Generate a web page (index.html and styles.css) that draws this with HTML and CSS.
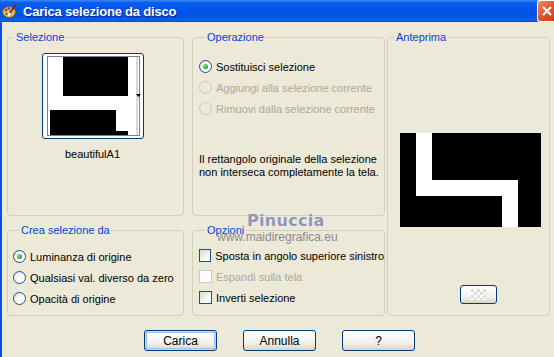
FILE: index.html
```html
<!DOCTYPE html>
<html lang="it">
<head>
    <meta charset="UTF-8">
    <title>Carica selezione da disco</title>
    <link rel="stylesheet" href="styles.css">
</head>
<body>
    <div class="window">
        <div class="titlebar">
            <svg class="app-icon" width="16" height="16" viewBox="0 0 16 16">
                <ellipse cx="7" cy="9" rx="6.5" ry="5.5" fill="#e9b36a" stroke="#8a5a20" stroke-width="1"/>
                <circle cx="4" cy="7" r="1.4" fill="#d0302a"/>
                <circle cx="7" cy="5.5" r="1.3" fill="#2a62d0"/>
                <circle cx="4.5" cy="11" r="1.3" fill="#2aa040"/>
                <path d="M14 1 L8 10" stroke="#6a3a10" stroke-width="2"/>
                <path d="M8 10 L6.5 13" stroke="#ffffff" stroke-width="2"/>
            </svg>
            <span class="title">Carica selezione da disco</span>
            <span class="close-btn">
                <svg width="16" height="14" viewBox="0 0 16 14">
                    <path d="M4 3 L12 11 M12 3 L4 11" stroke="#fff" stroke-width="2"/>
                </svg>
            </span>
        </div>

        <div class="client">
            <div class="panes">
                <fieldset class="group group-selection">
                    <legend>Selezione</legend>
                    <div class="thumb">
                        <svg width="100" height="84" viewBox="0 0 100 84">
                            <rect x="7" y="3" width="88" height="78" fill="#fff"/>
                            <rect x="20" y="3" width="65" height="39" fill="#000"/>
                            <rect x="7" y="56" width="66" height="25" fill="#000"/>
                            <rect x="73" y="77" width="12" height="4" fill="#000"/>
                            <rect x="93" y="3" width="2" height="78" fill="#d8d8d8"/>
                            <rect x="4.5" y="2.5" width="92" height="79" fill="none" stroke="#000" stroke-dasharray="1 1"/>
                            <path d="M93 40 L98 40 L95.5 43 Z" fill="#000"/>
                        </svg>
                    </div>
                    <div class="thumb-name">beautifulA1</div>
                </fieldset>

                <fieldset class="group group-operation">
                    <legend>Operazione</legend>
                    <div class="options">
                        <div class="option"><span class="radio checked"></span>Sostituisci selezione</div>
                        <div class="option disabled"><span class="radio"></span>Aggiungi alla selezione corrente</div>
                        <div class="option disabled"><span class="radio"></span>Rimuovi dalla selezione corrente</div>
                    </div>
                    <p class="note">Il rettangolo originale della selezione<br>non interseca completamente la tela.</p>
                </fieldset>

                <fieldset class="group group-preview">
                    <legend>Anteprima</legend>
                    <div class="preview">
                        <svg width="141" height="94" viewBox="0 0 141 94">
                            <rect width="141" height="94" fill="#000"/>
                            <rect x="16" y="0" width="16" height="63" fill="#fff"/>
                            <rect x="16" y="47" width="102" height="16" fill="#fff"/>
                            <rect x="102" y="47" width="16" height="47" fill="#fff"/>
                        </svg>
                    </div>
                    <button class="btn btn-small" type="button"><span class="checker"></span></button>
                </fieldset>

                <fieldset class="group group-source">
                    <legend>Crea selezione da</legend>
                    <div class="options">
                        <div class="option"><span class="radio checked"></span>Luminanza di origine</div>
                        <div class="option"><span class="radio"></span>Qualsiasi val. diverso da zero</div>
                        <div class="option"><span class="radio"></span>Opacità di origine</div>
                    </div>
                </fieldset>

                <fieldset class="group group-options">
                    <legend>Opzioni</legend>
                    <div class="options">
                        <div class="option"><span class="check"></span>Sposta in angolo superiore sinistro</div>
                        <div class="option disabled"><span class="check"></span>Espandi sulla tela</div>
                        <div class="option"><span class="check"></span>Inverti selezione</div>
                    </div>
                </fieldset>
            </div>

            <div class="buttons">
                <button class="btn btn-default" type="button">Carica</button>
                <button class="btn" type="button">Annulla</button>
                <button class="btn" type="button">?</button>
            </div>
        </div>

        <div class="watermark">
            <span class="wm-name">Pinuccia</span>
            <span class="wm-site">www.maidiregrafica.eu</span>
        </div>
    </div>
</body>
</html>
```

FILE: styles.css
```css
body {
    margin: 0;
    background: #ece9d8;
    font-family: "Liberation Sans", Arial, sans-serif;
    font-size: 11px;
    color: #000;
}
.window {
    position: relative;
    width: 554px;
    height: 357px;
    overflow: hidden;
    display: flex;
    flex-direction: column;
}
.titlebar {
    height: 22px;
    display: flex;
    align-items: center;
    padding-left: 2px;
    background: linear-gradient(#3d8af7 0%, #0a5fec 12%, #0055ea 45%, #0053e6 80%, #0a62f4 92%, #0046c8 100%);
}
.app-icon {
    margin-right: 5px;
}
.title {
    flex: 1;
    color: #fff;
    font-weight: bold;
    font-size: 13px;
    letter-spacing: -0.2px;
    text-shadow: 1px 1px 0 #0a2a8a;
}
.close-btn {
    width: 18px;
    height: 20px;
    margin-right: -2px;
    border: 1px solid #fff;
    border-right: none;
    border-radius: 3px 0 0 3px;
    background: linear-gradient(135deg, #f08a6a, #e0552f 50%, #c83c1c);
    display: flex;
    align-items: center;
    justify-content: center;
}
.client {
    flex: 1;
    border-left: 2px solid #0a4fe0;
    padding: 8px 4px 0 5px;
}
.panes {
    display: grid;
    grid-template-columns: 177px 193px 157px;
    grid-template-rows: 186px 93px;
    column-gap: 8px;
    row-gap: 7px;
}
.group {
    margin: 0;
    padding: 0;
    border: 1px solid #d0d0bf;
    border-radius: 4px;
    min-width: 0;
}
.group legend {
    margin-left: 6px;
    padding: 0 2px;
    color: #0046d5;
    font-size: 11px;
    line-height: 14px;
}
.group-selection {
    display: flex;
    flex-direction: column;
    align-items: center;
    padding-top: 9px;
    padding-right: 6px;
}
.thumb {
    width: 100px;
    height: 84px;
    border: 1px solid #003c74;
    border-radius: 3px;
    background: #fff;
}
.thumb svg {
    display: block;
}
.thumb-name {
    margin-top: 9px;
}
.options {
    display: flex;
    flex-direction: column;
}
.option {
    height: 21px;
    display: flex;
    align-items: center;
    gap: 4px;
    white-space: nowrap;
}
.option.disabled {
    color: #aca899;
}
.group-operation {
    padding: 12px 0 0 6px;
}
.group-source {
    padding: 9px 0 0 5px;
}
.group-options {
    padding: 8px 0 0 6px;
}
.radio {
    width: 11px;
    height: 11px;
    border: 1px solid #1c5180;
    border-radius: 50%;
    background: radial-gradient(circle at 70% 70%, #ffffff 30%, #dcd9cf 100%);
    display: flex;
    align-items: center;
    justify-content: center;
}
.radio.checked::after {
    content: "";
    width: 5px;
    height: 5px;
    border-radius: 50%;
    background: radial-gradient(circle at 35% 35%, #8fe08f, #21a121 70%);
}
.disabled .radio {
    border-color: #cac8bb;
    background: transparent;
}
.check {
    width: 11px;
    height: 11px;
    border: 1px solid #1c5180;
    background: linear-gradient(135deg, #dcd9cf, #ffffff 80%);
}
.disabled .check {
    border-color: #cac8bb;
    background: #fff;
}
.note {
    margin: 34px 0 0 0;
    line-height: 13px;
    white-space: nowrap;
}
.group-preview {
    grid-column: 3;
    grid-row: 1 / span 2;
    margin-left: -6px;
    display: flex;
    flex-direction: column;
    align-items: center;
}
.preview {
    margin-top: 89px;
    margin-left: 12px;
    align-self: flex-start;
}
.preview svg {
    display: block;
}
.btn {
    width: 73px;
    height: 21px;
    padding: 0;
    border: 1px solid #003c74;
    border-radius: 3px;
    background: linear-gradient(#ffffff, #f3f2ed 60%, #d8d5c8);
    font-family: "Liberation Sans", Arial, sans-serif;
    font-size: 12px;
    color: #000;
}
.btn-default {
    box-shadow: inset 0 0 0 1px #c6d7f5, inset 0 0 0 2px #a5c0ee;
}
.btn-small {
    width: 37px;
    height: 19px;
    margin-top: 58px;
    margin-left: 20px;
    display: flex;
    align-items: center;
    justify-content: center;
}
.checker {
    width: 16px;
    height: 11px;
    background: repeating-conic-gradient(#ffffff 0 25%, #dcdcdc 0 50%) 0 0 / 6px 6px;
}
.buttons {
    display: flex;
    justify-content: center;
    gap: 26px;
    margin-top: 14px;
    padding-left: 2px;
}
.watermark {
    position: absolute;
    left: 217px;
    top: 211px;
    display: flex;
    flex-direction: column;
    align-items: flex-start;
    pointer-events: none;
}
.wm-name {
    margin-left: 30px;
    font-family: "DejaVu Sans", sans-serif;
    font-weight: bold;
    font-size: 16px;
    letter-spacing: 0.3px;
    color: #9096b8;
    text-shadow: 0 0 1px #ffffff;
}
.wm-site {
    margin-top: 0;
    font-size: 12px;
    color: #8c8c8c;
}
```
